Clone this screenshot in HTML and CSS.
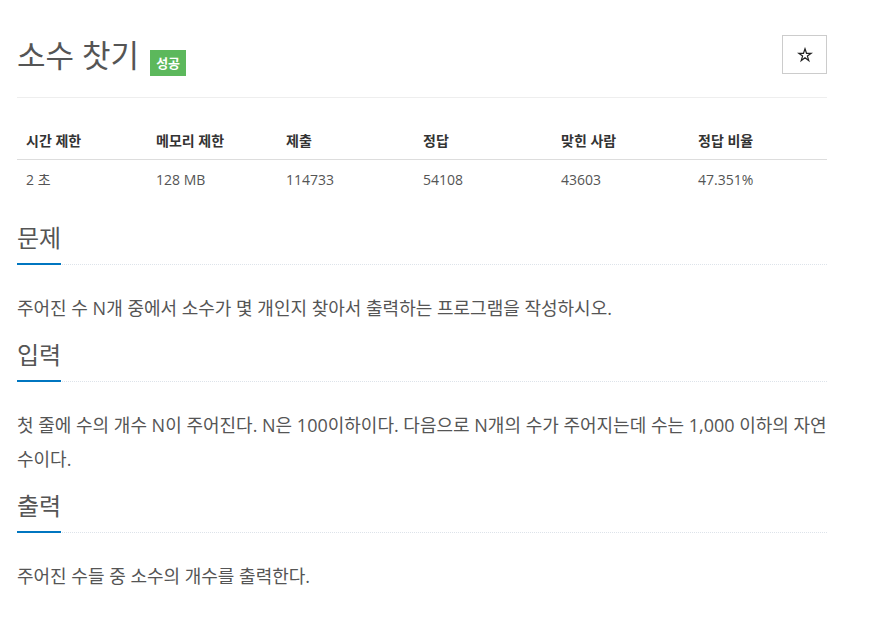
FILE: index.html
```html
<!DOCTYPE html>
<html lang="ko">
<head>
<meta charset="utf-8">
<title>소수 찻기</title>
<link rel="stylesheet" href="styles.css">
</head>
<body>
<div class="container">
  <div class="page-header">
    <div class="title-group">
      <h1 class="title">소수 찻기</h1>
      <span class="badge">성공</span>
    </div>
    <button class="star-btn" type="button" aria-label="즐겨찾기">
      <svg width="16" height="16" viewBox="0 0 16 16">
        <path d="M8 1.8 L9.5 6.3 L14.2 6.3 L10.4 9.1 L11.8 13.6 L8 10.8 L4.2 13.6 L5.6 9.1 L1.8 6.3 L6.5 6.3 Z" fill="none" stroke="#222" stroke-width="1.2" stroke-linejoin="miter"/>
      </svg>
    </button>
  </div>

  <table class="info">
    <thead>
      <tr>
        <th class="c1">시간 제한</th>
        <th class="c2">메모리 제한</th>
        <th class="c3">제출</th>
        <th class="c4">정답</th>
        <th class="c5">맞힌 사람</th>
        <th class="c6">정답 비율</th>
      </tr>
    </thead>
    <tbody>
      <tr>
        <td>2 초</td>
        <td>128 MB</td>
        <td>114733</td>
        <td>54108</td>
        <td>43603</td>
        <td>47.351%</td>
      </tr>
    </tbody>
  </table>

  <section class="section">
    <h2 class="headline"><span>문제</span></h2>
    <p class="text">주어진 수 N개 중에서 소수가 몇 개인지 찾아서 출력하는 프로그램을 작성하시오.</p>
  </section>

  <section class="section">
    <h2 class="headline"><span>입력</span></h2>
    <p class="text">첫 줄에 수의 개수 N이 주어진다. N은 100이하이다. 다음으로 N개의 수가 주어지는데 수는 1,000 이하의 자연수이다.</p>
  </section>

  <section class="section">
    <h2 class="headline"><span>출력</span></h2>
    <p class="text">주어진 수들 중 소수의 개수를 출력한다.</p>
  </section>
</div>
</body>
</html>
```

FILE: styles.css
```css
* { box-sizing: border-box; }
html, body { margin: 0; padding: 0; background: #fff; }
body {
  font-family: "Open Sans", "Noto Sans CJK KR", sans-serif;
  color: #555;
  font-size: 14px;
}
.container {
  width: 810px;
  margin-left: 17px;
}
.page-header {
  display: flex;
  justify-content: space-between;
  align-items: flex-start;
  padding-top: 35px;
  padding-bottom: 21px;
  border-bottom: 1px solid #eee;
}
.title-group {
  display: flex;
  align-items: flex-start;
}
.title {
  margin: 0;
  font-size: 31px;
  font-weight: 400;
  line-height: 40px;
  color: #555;
}
.badge {
  margin-top: 15px;
  margin-left: 11px;
  height: 26px;
  padding: 0 6px;
  background: #5cb85c;
  color: #fff;
  font-size: 13px;
  font-weight: 700;
  line-height: 26px;
}
.star-btn {
  width: 45px;
  height: 39px;
  border: 1px solid #ccc;
  background: #fff;
  padding: 0;
  display: flex;
  align-items: center;
  justify-content: center;
}
.info {
  width: 810px;
  border-collapse: collapse;
  margin-top: 25px;
  table-layout: fixed;
}
.info th, .info td {
  text-align: left;
  padding: 8px 9px;
  line-height: 20px;
  font-size: 14px;
}
.info td { padding-top: 10px; }
.info th {
  color: #333;
  font-weight: 700;
  border-bottom: 1px solid #ddd;
}
.info td { color: #555; }
.c1 { width: 130px; }
.c2 { width: 130px; }
.c3 { width: 137px; }
.c4 { width: 138px; }
.c5 { width: 137px; }
.c6 { width: 138px; }
.section { margin-top: 17px; }
.info + .section { margin-top: 27px; }
.headline {
  margin: 0;
  display: flex;
  font-size: 24px;
  font-weight: 400;
  line-height: 26px;
  color: #555;
  border-bottom: 1px dotted #dde3ea;
}
.headline span {
  padding-bottom: 12px;
  border-bottom: 2px solid #0076c0;
  margin-bottom: -1px;
}
.text {
  margin: 26px 0 0;
  font-size: 18px;
  line-height: 34px;
  color: #555;
}
```
